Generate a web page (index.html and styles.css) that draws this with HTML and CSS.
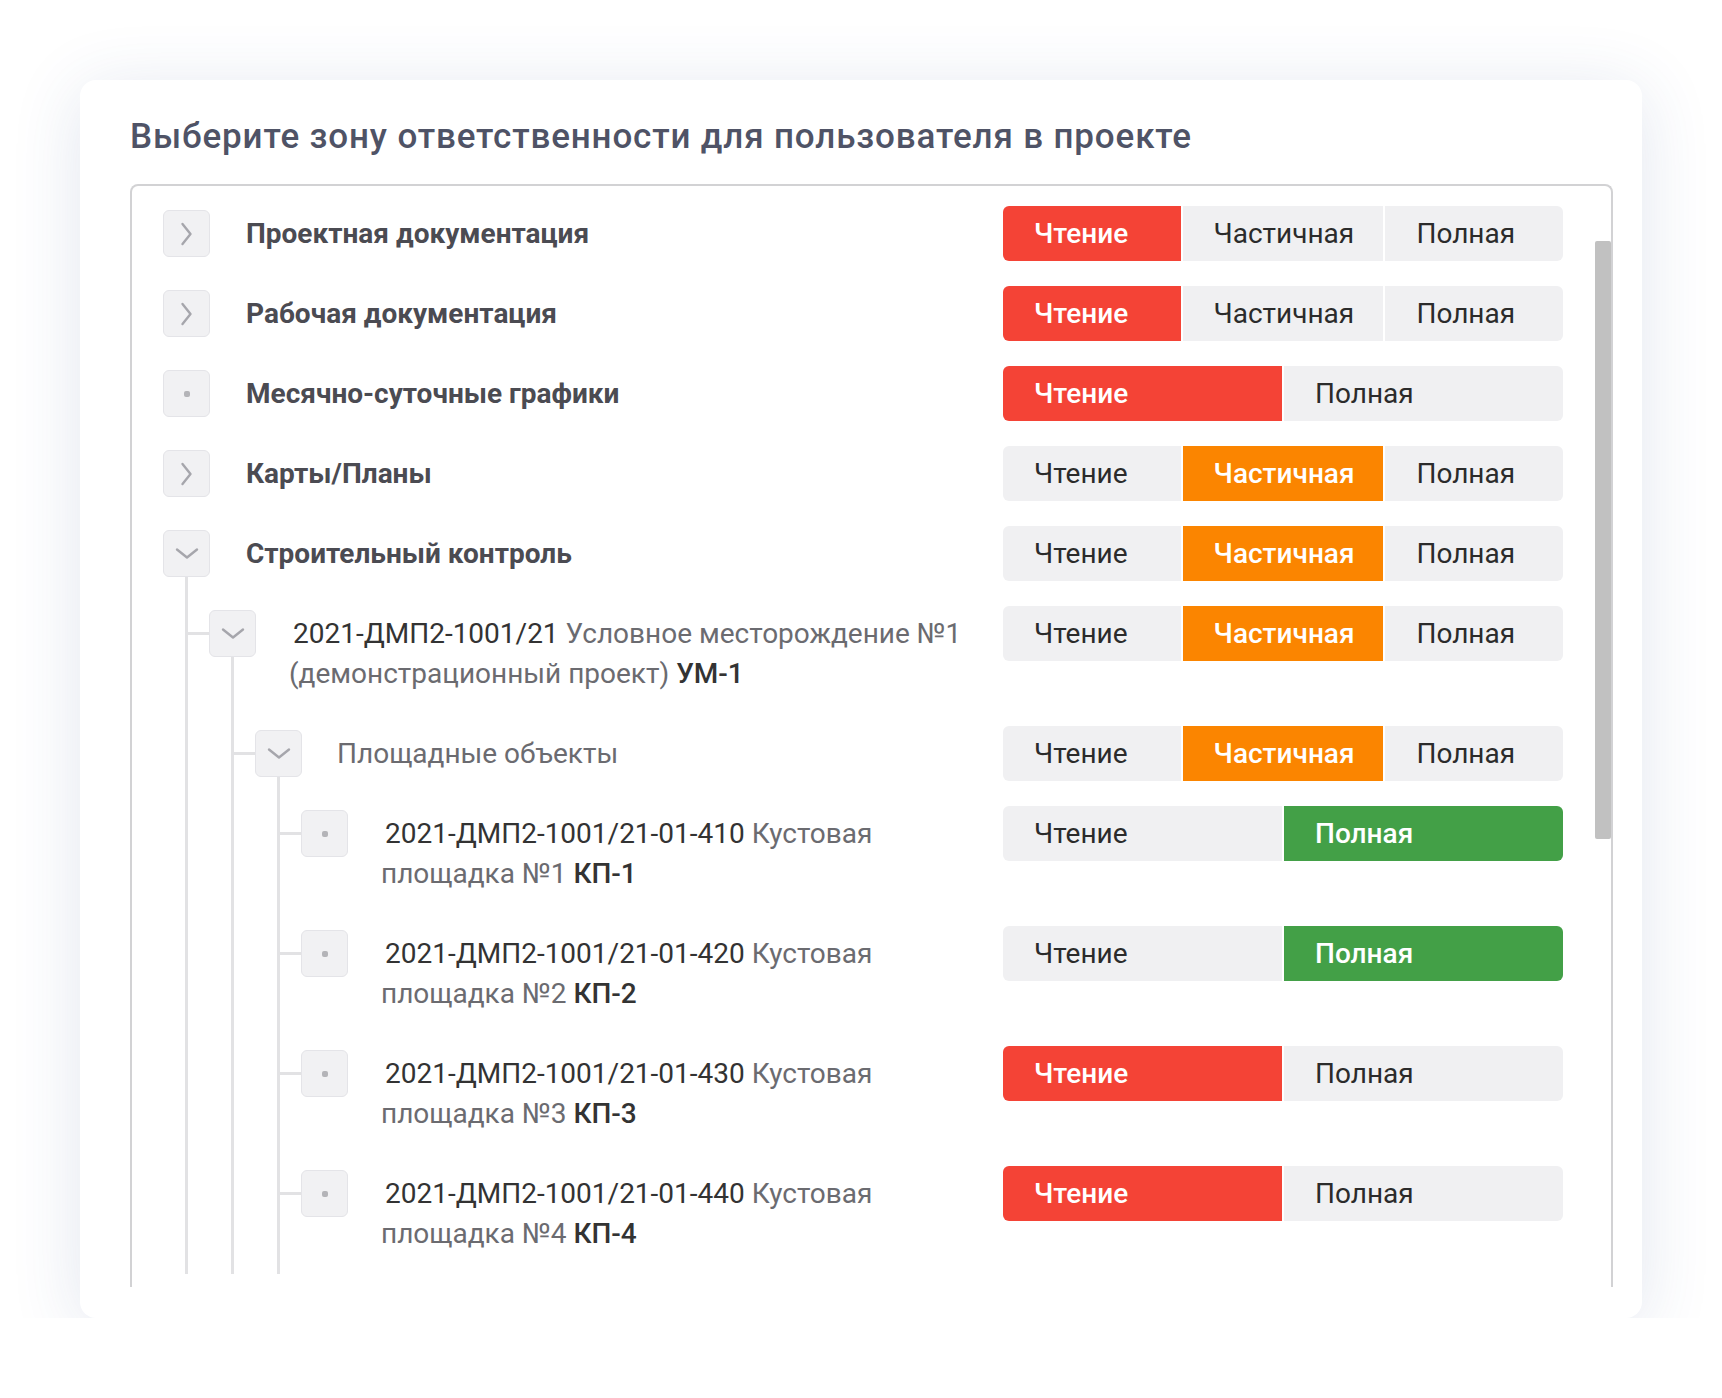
FILE: index.html
```html
<!DOCTYPE html>
<html lang="ru">
<head>
    <meta charset="UTF-8">
    <meta name="viewport" content="width=device-width, initial-scale=1.0">
    <title>Зона ответственности</title>
    <link rel="stylesheet" href="styles.css">
</head>
<body>
    <div class="card">
        <div class="card-title">Выберите зону ответственности для пользователя в проекте</div>
        <div class="tree-box">
            <div class="tree-scroll">

                <div class="node">
                    <div class="row">
                        <span class="toggle"><svg width="13" height="24" viewBox="0 0 13 24"><polyline points="2.5,2 10.5,12 2.5,22"/></svg></span>
                        <div class="label label-root">Проектная документация</div>
                        <div class="perm">
                            <span class="seg seg-read on-red">Чтение</span>
                            <span class="seg seg-part">Частичная</span>
                            <span class="seg seg-full">Полная</span>
                        </div>
                    </div>
                </div>

                <div class="node">
                    <div class="row">
                        <span class="toggle"><svg width="13" height="24" viewBox="0 0 13 24"><polyline points="2.5,2 10.5,12 2.5,22"/></svg></span>
                        <div class="label label-root">Рабочая документация</div>
                        <div class="perm">
                            <span class="seg seg-read on-red">Чтение</span>
                            <span class="seg seg-part">Частичная</span>
                            <span class="seg seg-full">Полная</span>
                        </div>
                    </div>
                </div>

                <div class="node">
                    <div class="row">
                        <span class="toggle"><i class="dot"></i></span>
                        <div class="label label-root">Месячно-суточные графики</div>
                        <div class="perm perm-two">
                            <span class="seg on-red">Чтение</span>
                            <span class="seg">Полная</span>
                        </div>
                    </div>
                </div>

                <div class="node">
                    <div class="row">
                        <span class="toggle"><svg width="13" height="24" viewBox="0 0 13 24"><polyline points="2.5,2 10.5,12 2.5,22"/></svg></span>
                        <div class="label label-root">Карты/Планы</div>
                        <div class="perm">
                            <span class="seg seg-read">Чтение</span>
                            <span class="seg seg-part on-orange">Частичная</span>
                            <span class="seg seg-full">Полная</span>
                        </div>
                    </div>
                </div>

                <div class="node open">
                    <div class="row">
                        <span class="toggle"><svg width="24" height="13" viewBox="0 0 24 13"><polyline points="2,2.5 12,10.5 22,2.5"/></svg></span>
                        <div class="label label-root">Строительный контроль</div>
                        <div class="perm">
                            <span class="seg seg-read">Чтение</span>
                            <span class="seg seg-part on-orange">Частичная</span>
                            <span class="seg seg-full">Полная</span>
                        </div>
                    </div>

                    <div class="children">
                        <div class="node open">
                            <div class="row">
                                <span class="toggle"><svg width="24" height="13" viewBox="0 0 24 13"><polyline points="2,2.5 12,10.5 22,2.5"/></svg></span>
                                <div class="label label-code"><span class="code">2021-ДМП2-1001/21</span> Условное месторождение №1 (демонстрационный проект) <span class="short">УМ-1</span></div>
                                <div class="perm">
                                    <span class="seg seg-read">Чтение</span>
                                    <span class="seg seg-part on-orange">Частичная</span>
                                    <span class="seg seg-full">Полная</span>
                                </div>
                            </div>

                            <div class="children">
                                <div class="node open">
                                    <div class="row">
                                        <span class="toggle"><svg width="24" height="13" viewBox="0 0 24 13"><polyline points="2,2.5 12,10.5 22,2.5"/></svg></span>
                                        <div class="label">Площадные объекты</div>
                                        <div class="perm">
                                            <span class="seg seg-read">Чтение</span>
                                            <span class="seg seg-part on-orange">Частичная</span>
                                            <span class="seg seg-full">Полная</span>
                                        </div>
                                    </div>

                                    <div class="children">
                                        <div class="node">
                                            <div class="row">
                                                <span class="toggle"><i class="dot"></i></span>
                                                <div class="label label-code"><span class="code">2021-ДМП2-1001/21-01-410</span> Кустовая площадка №1 <span class="short">КП-1</span></div>
                                                <div class="perm perm-two">
                                                    <span class="seg">Чтение</span>
                                                    <span class="seg on-green">Полная</span>
                                                </div>
                                            </div>
                                        </div>
                                        <div class="node">
                                            <div class="row">
                                                <span class="toggle"><i class="dot"></i></span>
                                                <div class="label label-code"><span class="code">2021-ДМП2-1001/21-01-420</span> Кустовая площадка №2 <span class="short">КП-2</span></div>
                                                <div class="perm perm-two">
                                                    <span class="seg">Чтение</span>
                                                    <span class="seg on-green">Полная</span>
                                                </div>
                                            </div>
                                        </div>
                                        <div class="node">
                                            <div class="row">
                                                <span class="toggle"><i class="dot"></i></span>
                                                <div class="label label-code"><span class="code">2021-ДМП2-1001/21-01-430</span> Кустовая площадка №3 <span class="short">КП-3</span></div>
                                                <div class="perm perm-two">
                                                    <span class="seg on-red">Чтение</span>
                                                    <span class="seg">Полная</span>
                                                </div>
                                            </div>
                                        </div>
                                        <div class="node">
                                            <div class="row">
                                                <span class="toggle"><i class="dot"></i></span>
                                                <div class="label label-code"><span class="code">2021-ДМП2-1001/21-01-440</span> Кустовая площадка №4 <span class="short">КП-4</span></div>
                                                <div class="perm perm-two">
                                                    <span class="seg on-red">Чтение</span>
                                                    <span class="seg">Полная</span>
                                                </div>
                                            </div>
                                        </div>
                                    </div>
                                </div>
                            </div>
                        </div>
                    </div>
                </div>

            </div>
            <div class="scroll-thumb"></div>
        </div>
    </div>
</body>
</html>
```

FILE: styles.css
```css
body {
    margin: 0;
    padding: 80px 0 0 80px;
    background-color: #fff;
    font-family: Roboto, "Noto Sans", sans-serif;
    color: #333;
}

.card {
    box-sizing: border-box;
    width: 1562px;
    height: 1238px;
    padding: 37px 29px 31px 50px;
    background-color: #fff;
    border-radius: 16px;
    box-shadow: 0 10px 70px rgba(50, 80, 140, 0.14);
}

.card-title {
    font-size: 35px;
    line-height: 40px;
    font-weight: 500;
    letter-spacing: 0.85px;
    color: #4f5366;
    margin: 0 0 27px 0;
}

.tree-box {
    position: relative;
    height: 1101px;
    border: 2px solid #d2d2d4;
    border-bottom: none;
    border-radius: 8px 8px 0 0;
}

.tree-scroll {
    height: 1088px;
    overflow: hidden;
    padding: 0 48px 0 31px;
}

.scroll-thumb {
    position: absolute;
    top: 55px;
    right: 0;
    width: 16px;
    height: 598px;
    background-color: #c1c1c1;
    border-radius: 2px;
}

.node {
    position: relative;
}

.node.open::before {
    content: '';
    position: absolute;
    left: 22px;
    top: 71px;
    bottom: -60px;
    width: 3px;
    background-color: #e2e2e4;
}

.row {
    position: relative;
    display: flex;
    align-items: flex-start;
    padding: 20px 0 5px;
}

.toggle {
    flex: none;
    box-sizing: border-box;
    width: 47px;
    height: 47px;
    margin-top: 4px;
    display: flex;
    align-items: center;
    justify-content: center;
    background-color: #f1f1f3;
    border: 1px solid #e4e4e8;
    border-radius: 6px;
}

.toggle svg polyline {
    fill: none;
    stroke: #a6a6ac;
    stroke-width: 2.4;
    stroke-linecap: round;
    stroke-linejoin: round;
}

.dot {
    width: 6px;
    height: 6px;
    border-radius: 2px;
    background-color: #b4b4b8;
}

.label {
    flex: 1;
    margin: 0 20px 0 35px;
    padding: 7.5px 0;
    font-size: 28px;
    line-height: 40px;
    color: #6b6b70;
}

.label-code {
    margin-left: 33px;
    text-indent: 4px;
}

.label-root {
    font-weight: 700;
    color: #4b4b52;
    margin-left: 36px;
}

.code {
    color: #333;
}

.short {
    color: #333;
    font-weight: 500;
}

.perm {
    flex: none;
    width: 560px;
    height: 55px;
    display: flex;
    gap: 2px;
}

.seg {
    flex: 176;
    box-sizing: border-box;
    padding-left: 31px;
    font-size: 28px;
    line-height: 55px;
    color: #2b2b2b;
    background-color: #f0f0f2;
}

.seg-part {
    flex: 204;
}

.perm-two .seg {
    flex: 1;
}

.seg:first-child {
    border-radius: 6px 0 0 6px;
}

.seg:last-child {
    border-radius: 0 6px 6px 0;
}

.on-red,
.on-orange,
.on-green {
    color: #fff;
    font-weight: 500;
}

.on-red {
    background-color: #f44336;
}

.on-orange {
    background-color: #fb8500;
}

.on-green {
    background-color: #43a047;
}

.children {
    margin-left: 46px;
}

/* short connector from the parent line to the child toggle */
.children > .node > .row::before {
    content: '';
    position: absolute;
    left: -21px;
    top: 46px;
    width: 21px;
    height: 3px;
    background-color: #e2e2e4;
}
```
